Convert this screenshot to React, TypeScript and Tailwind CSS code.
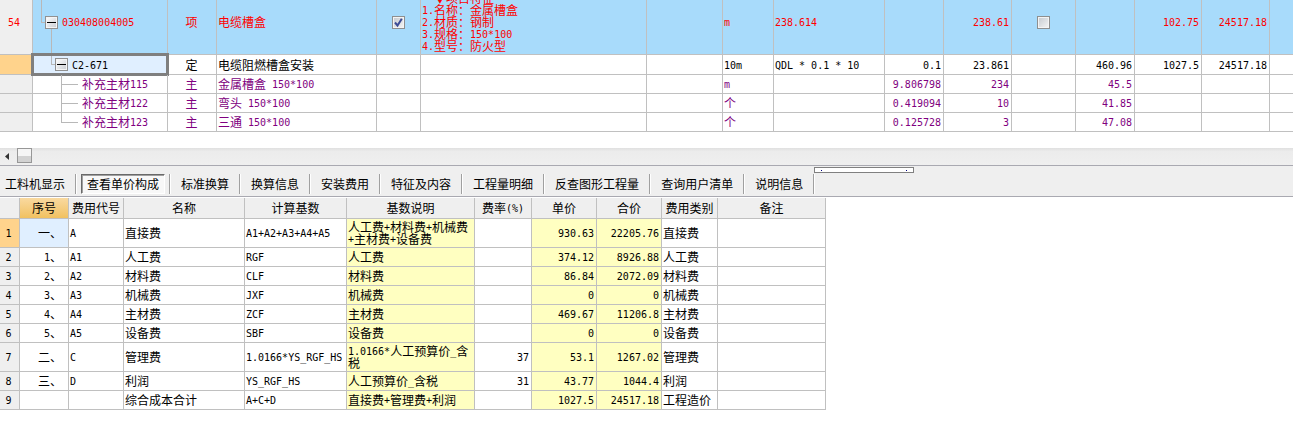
import React from 'react';

interface BillRow {
  no: string;
  code: string;
  type: string;
  name: string;
  unit: string;
  expr: string;
  content: string;
  qty: string;
  price: string;
  unitPrice: string;
  total: string;
}

const materials: BillRow[] = [
  { no: '', code: '补充主材115', type: '主', name: '金属槽盒 150*100', unit: 'm', expr: '', content: '9.806798', qty: '234', price: '45.5', unitPrice: '', total: '' },
  { no: '', code: '补充主材122', type: '主', name: '弯头 150*100', unit: '个', expr: '', content: '0.419094', qty: '10', price: '41.85', unitPrice: '', total: '' },
  { no: '', code: '补充主材123', type: '主', name: '三通 150*100', unit: '个', expr: '', content: '0.125728', qty: '3', price: '47.08', unitPrice: '', total: '' },
];

const features = ['1.名称：金属槽盒', '2.材质：钢制', '3.规格：150*100', '4.型号：防火型'];

const tabs = ['工料机显示', '查看单价构成', '标准换算', '换算信息', '安装费用', '特征及内容', '工程量明细', '反查图形工程量', '查询用户清单', '说明信息'];

const feeHeaders = ['序号', '费用代号', '名称', '计算基数', '基数说明', '费率(%)', '单价', '合价', '费用类别', '备注'];

const fees = [
  ['一、', 'A', '直接费', 'A1+A2+A3+A4+A5', '人工费+材料费+机械费+主材费+设备费', '', '930.63', '22205.76', '直接费'],
  ['1、', 'A1', '人工费', 'RGF', '人工费', '', '374.12', '8926.88', '人工费'],
  ['2、', 'A2', '材料费', 'CLF', '材料费', '', '86.84', '2072.09', '材料费'],
  ['3、', 'A3', '机械费', 'JXF', '机械费', '', '0', '0', '机械费'],
  ['4、', 'A4', '主材费', 'ZCF', '主材费', '', '469.67', '11206.8', '主材费'],
  ['5、', 'A5', '设备费', 'SBF', '设备费', '', '0', '0', '设备费'],
  ['二、', 'C', '管理费', '1.0166*YS_RGF_HS', '1.0166*人工预算价_含税', '37', '53.1', '1267.02', '管理费'],
  ['三、', 'D', '利润', 'YS_RGF_HS', '人工预算价_含税', '31', '43.77', '1044.4', '利润'],
  ['', '', '综合成本合计', 'A+C+D', '直接费+管理费+利润', '', '1027.5', '24517.18', '工程造价'],
];

const cell = 'border-r border-b border-[#c0c0c0] pl-px pr-0.5';
const headCell = 'border-r border-b border-[#c0c0c0] bg-[#efefef] font-normal';

// Latin runs use a half-width monospace face next to the full-width characters
const Mixed: React.FC<{ text: string }> = ({ text }) => (
  <>
    {text.split(/([\x20-\x7e]+)/).map((part, i) =>
      i % 2 ? (
        <span key={i} className="align-[1px] font-['DejaVu_Sans_Mono',monospace] text-[10px] leading-[0px]">{part}</span>
      ) : (
        part
      )
    )}
  </>
);

const Collapse: React.FC<{ label: string }> = ({ label }) => (
  <button type="button" aria-label={label} className="relative size-[13px] shrink-0 border border-[#919191] bg-linear-to-br from-white to-[#c8ccd2] shadow-[inset_0_0_0_1px_#f4f4f4]">
    <span className="mx-auto block h-px w-[9px] bg-black" />
  </button>
);

const Check: React.FC<{ label: string; checked?: boolean }> = ({ label, checked }) => (
  <span className="relative mx-auto block size-[13px]">
    <input
      type="checkbox"
      aria-label={label}
      defaultChecked={checked}
      className="block size-[13px] appearance-none border border-[#8e8f8f] bg-linear-to-br from-[#c4c9cf] to-[#f6f6f6] shadow-[inset_0_0_0_1px_#f4f4f4]"
    />
    {checked && (
      <svg viewBox="0 0 13 13" className="pointer-events-none absolute inset-0 size-[13px]" fill="none" stroke="#3c4c96" strokeWidth="2">
        <path d="M3 6.5 L5.5 9.5 L9.8 2.8" />
      </svg>
    )}
  </span>
);

const TreeLines: React.FC<{ d: string }> = ({ d }) => (
  <svg className="pointer-events-none absolute inset-0 size-full" fill="none" stroke="#b8b8b8" shapeRendering="crispEdges">
    <path d={d} />
  </svg>
);

const BillTable: React.FC = () => (
  <table className="-mt-2.5 w-full table-fixed border-separate border-spacing-0">
    <colgroup>
      <col className="w-[33px]" />
      <col className="w-[135px]" />
      <col className="w-[49px]" />
      <col className="w-[160px]" />
      <col className="w-[44px]" />
      <col className="w-[226px]" />
      <col className="w-[76px]" />
      <col className="w-[51px]" />
      <col className="w-[111px]" />
      <col className="w-[59px]" />
      <col className="w-[68px]" />
      <col className="w-[64px]" />
      <col className="w-[59px]" />
      <col className="w-[67px]" />
      <col className="w-[68px]" />
      <col />
    </colgroup>
    <tbody>
      <tr className="h-[65px] bg-[#a8dbfb] text-[#ff0000]">
        <th className={`${headCell} pr-1`}><Mixed text="54" /></th>
        <td className={`${cell} relative`}>
          <TreeLines d="M8.5 0 V32.5 H13 M18.5 39 V65" />
          <div className="flex items-center gap-1 pl-[11px]">
            <Collapse label="收起 030408004005" />
            <span><Mixed text="030408004005" /></span>
          </div>
        </td>
        <td className={`${cell} text-center`}>项</td>
        <td className={cell}>电缆槽盒</td>
        <td className={cell}><Check label="电缆槽盒" checked /></td>
        <td className={`${cell} whitespace-nowrap`}>
          <div className="pl-3">▼项目特征</div>
          {features.map(f => <div key={f}><Mixed text={f} /></div>)}
        </td>
        <td className={cell} />
        <td className={cell}><Mixed text="m" /></td>
        <td className={cell}><Mixed text="238.614" /></td>
        <td className={cell} />
        <td className={`${cell} text-right`}><Mixed text="238.61" /></td>
        <td className={cell}><Check label="锁定综合单价" /></td>
        <td className={cell} />
        <td className={`${cell} text-right`}><Mixed text="102.75" /></td>
        <td className={`${cell} text-right`}><Mixed text="24517.18" /></td>
        <td className="border-b border-[#c0c0c0]" />
      </tr>
      <tr className="h-5">
        <th className="border-r border-b border-[#c0c0c0] bg-[#ffd38c]" />
        <td className={`${cell} relative`}>
          <div className="absolute -inset-0.5 border-3 border-[#7f7f7f] bg-[#e0efff]" />
          <TreeLines d="M18.5 1 V9.5 H23" />
          <div className="relative flex items-center gap-1 pl-[21px]">
            <Collapse label="收起 C2-671" />
            <span><Mixed text="C2-671" /></span>
          </div>
        </td>
        <td className={`${cell} text-center`}>定</td>
        <td className={cell}>电缆阻燃槽盒安装</td>
        <td className={cell} />
        <td className={cell} />
        <td className={cell} />
        <td className={cell}><Mixed text="10m" /></td>
        <td className={cell}><Mixed text="QDL * 0.1 * 10" /></td>
        <td className={`${cell} text-right`}><Mixed text="0.1" /></td>
        <td className={`${cell} text-right`}><Mixed text="23.861" /></td>
        <td className={cell} />
        <td className={`${cell} text-right`}><Mixed text="460.96" /></td>
        <td className={`${cell} text-right`}><Mixed text="1027.5" /></td>
        <td className={`${cell} text-right`}><Mixed text="24517.18" /></td>
        <td className="border-b border-[#c0c0c0]" />
      </tr>
      {materials.map((m, i) => (
        <tr key={m.code} className="h-[19px] text-[#800080]">
          <th className={headCell} />
          <td className={`${cell} relative`}>
            <TreeLines d={i < materials.length - 1 ? 'M28.5 0 V19 M28.5 9.5 H45' : 'M28.5 0 V9.5 H45'} />
            <div className="pl-12"><Mixed text={m.code} /></div>
          </td>
          <td className={`${cell} text-center`}>{m.type}</td>
          <td className={cell}><Mixed text={m.name} /></td>
          <td className={cell} />
          <td className={cell} />
          <td className={cell} />
          <td className={cell}><Mixed text={m.unit} /></td>
          <td className={cell}><Mixed text={m.expr} /></td>
          <td className={`${cell} text-right`}><Mixed text={m.content} /></td>
          <td className={`${cell} text-right`}><Mixed text={m.qty} /></td>
          <td className={cell} />
          <td className={`${cell} text-right`}><Mixed text={m.price} /></td>
          <td className={cell}><Mixed text={m.unitPrice} /></td>
          <td className={cell}><Mixed text={m.total} /></td>
          <td className="border-b border-[#c0c0c0]" />
        </tr>
      ))}
    </tbody>
  </table>
);

const ScrollBar: React.FC = () => (
  <div className="mt-4 flex h-[17px] bg-linear-to-b from-[#e0e0e0] via-[#ececec] via-20% to-[#efefef]">
    <button type="button" aria-label="向左滚动" className="flex w-[17px] items-center pl-[5px]">
      <svg width="4" height="7" viewBox="0 0 4 7" fill="#333"><path d="M4 0 V7 L0 3.5 Z" /></svg>
    </button>
    <div className="h-[15px] w-[15px] border border-[#979797] bg-linear-to-b from-[#f5f5f5] from-50% to-[#d2d2d2] to-55%" />
  </div>
);

const TabBar: React.FC = () => (
  <div className="relative flex h-8 items-start border-y border-[#a9a9b1] bg-[#efefef] pt-2">
    {tabs.map((t, i) => (
      <div key={t} className="flex h-5 shrink-0 items-center border-r border-white">
        {i === 1 ? (
          <button type="button" className="mx-1 h-5 border border-t-[#696969] border-l-[#696969] border-r-white border-b-white bg-[#f8f8f8] px-[5px] shadow-[inset_1px_1px_0_#a0a0a0]">{t}</button>
        ) : (
          <button type="button" className={i === 0 ? 'h-5 pr-2.5 pl-[5px]' : 'h-5 px-2.5'}>{t}</button>
        )}
        <span className="h-5 w-px bg-[#a0a0a0]" />
      </div>
    ))}
    <div className="absolute top-px left-[814px] flex h-1.5 w-[100px] items-center justify-between border border-[#808080] bg-white px-1.5">
      <span className="size-px bg-[#000080]" />
      <span className="size-px bg-[#000080]" />
    </div>
  </div>
);

const FeeTable: React.FC = () => (
  <table className="mt-px w-[826px] table-fixed border-separate border-spacing-0">
    <colgroup>
      <col className="w-5" />
      <col className="w-[49px]" />
      <col className="w-[55px]" />
      <col className="w-[121px]" />
      <col className="w-[102px]" />
      <col className="w-[128px]" />
      <col className="w-[57px]" />
      <col className="w-[65px]" />
      <col className="w-[65px]" />
      <col className="w-[56px]" />
      <col className="w-[108px]" />
    </colgroup>
    <thead>
      <tr className="h-[21px]">
        <th className={headCell} />
        {feeHeaders.map((h, i) => (
          <th key={h} className={i === 0 ? 'border-r border-b border-[#c0c0c0] bg-linear-to-b from-[#f9d99f] to-[#f1c15f] font-normal' : headCell}>
            <Mixed text={h} />
          </th>
        ))}
      </tr>
    </thead>
    <tbody>
      {fees.map((f, i) => (
        <tr key={i} className={i === 0 || i === 6 ? 'h-[29px]' : 'h-[19px]'}>
          <th className={i === 0 ? 'border-r border-b border-[#c0c0c0] bg-[#ffd38c] pr-0.5 font-normal' : `${headCell} pr-0.5`}>
            <Mixed text={String(i + 1)} />
          </th>
          <td className={`border-r border-b border-[#c0c0c0] pr-1.5 text-right ${i === 0 ? 'bg-[#e0efff]' : ''}`}><Mixed text={f[0]} /></td>
          <td className={cell}><Mixed text={f[1]} /></td>
          <td className={cell}><Mixed text={f[2]} /></td>
          <td className={`${cell} whitespace-nowrap`}><Mixed text={f[3]} /></td>
          <td className={`${cell} bg-[#ffffc1] break-all`}><Mixed text={f[4]} /></td>
          <td className={`${cell} text-right`}><Mixed text={f[5]} /></td>
          <td className={`${cell} bg-[#ffffc1] text-right`}><Mixed text={f[6]} /></td>
          <td className={`${cell} bg-[#ffffc1] text-right`}><Mixed text={f[7]} /></td>
          <td className={cell}><Mixed text={f[8]} /></td>
          <td className={cell} />
        </tr>
      ))}
    </tbody>
  </table>
);

const App: React.FC = () => {
  return (
    <div className="min-h-screen w-full overflow-hidden bg-white font-['Noto_Sans_CJK_SC',sans-serif] text-[12px] leading-[12px] text-black">
      <div className="flow-root overflow-hidden">
        <BillTable />
      </div>
      <ScrollBar />
      <TabBar />
      <FeeTable />
    </div>
  );
};

export default App;
